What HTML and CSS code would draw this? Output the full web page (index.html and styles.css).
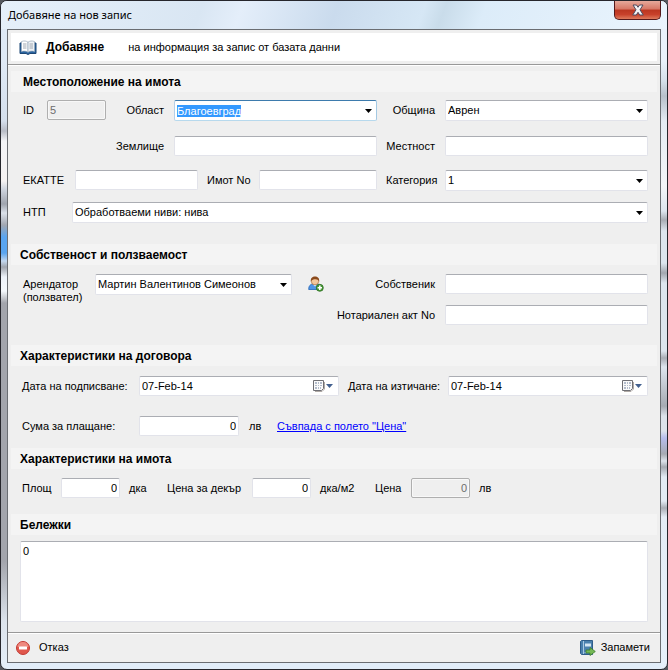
FILE: index.html
```
<!DOCTYPE html>
<html lang="bg">
<head>
<meta charset="utf-8">
<title>Добавяне на нов запис</title>
<link rel="stylesheet" href="styles.css">
</head>
<body>
<div class="window">
  <header class="titlebar">
    <h1>Добавяне на нов запис</h1>
    <button class="close" type="button" aria-label="Затвори">
      <svg width="14" height="12" viewBox="0 0 14 12"><path d="M2 1h3.500l1.500 2.300L8.500 1H12L9 5.800 12.300 11H8.700L7 8.300 5.300 11H1.700L5 5.800z" fill="#f4f4f6" stroke="#4c4a5e" stroke-width="1"/></svg>
    </button>
  </header>

  <form class="client">
    <div class="banner">
      <div class="banner-inner">
        <svg class="book" width="18" height="15" viewBox="0 0 18 15"><path d="M1 3h16v10.500h-6L9 14.500l-2-1H1z" fill="#2a64a0" stroke="#1d4674"/><path d="M2.500 1.500C5 .5 7.500 1 9 2.200v10C7.500 11 5 10.800 2.500 11.500z" fill="#fff" stroke="#9aa9ba" stroke-width=".7"/><path d="M15.500 1.500C13 .5 10.500 1 9 2.200v10c1.500-1.200 4-1.400 6.500-.700z" fill="#edf1f5" stroke="#9aa9ba" stroke-width=".7"/><path d="M4 4h3.500M4 6h3.500M4 8h3.500M10.500 4H14M10.500 6H14M10.500 8H14" stroke="#a0a8b2"/></svg>
        <strong>Добавяне</strong>
        <span>на информация за запис от базата данни</span>
      </div>
    </div>

    <section>
      <h2 class="wide">Местоположение на имота</h2>
      <div class="fields location">
        <label for="id">ID</label>
        <input id="id" class="box" type="text" value="5" disabled>
        <label class="end" for="region">Област</label>
        <div class="combo active"><input id="region" class="box" type="text" role="combobox" aria-expanded="false" value="Благоевград" autofocus onfocus="this.select()"></div>
        <label class="end" for="municipality">Община</label>
        <div class="combo"><select id="municipality" class="box"><option>Аврен</option></select></div>

        <label class="end from-left" for="land">Землище</label>
        <input id="land" class="box" type="text">
        <label class="end" for="area">Местност</label>
        <input id="area" class="box" type="text">

        <div class="left-half codes">
          <label for="ekatte">ЕКАТТЕ</label>
          <input id="ekatte" class="box" type="text">
          <label for="plot">Имот No</label>
          <input id="plot" class="box" type="text">
        </div>
        <label class="indent" for="category">Категория</label>
        <div class="combo"><select id="category" class="box"><option>1</option></select></div>

        <div class="full usage">
          <label for="ntp">НТП</label>
          <div class="combo"><select id="ntp" class="box"><option>Обработваеми ниви: нива</option></select></div>
        </div>
      </div>
    </section>

    <section>
      <h2>Собственост и ползваемост</h2>
      <div class="fields ownership">
        <div class="left-half tenant">
          <label class="two-line" for="tenant">Арендатор<br>(ползвател)</label>
          <div class="combo"><select id="tenant" class="box"><option>Мартин Валентинов Симеонов</option></select></div>
          <button class="icon-button" type="button" aria-label="Нов арендатор">
            <svg width="16" height="16" viewBox="0 0 16 16"><path d="M.700 13.500C.700 9.500 2.500 8.500 4.500 8h5c2 .5 3.500 1.500 3.500 5.500z" fill="#4f95e6" stroke="#2465b5" stroke-width=".8"/><path d="M5 8.500l2 2 2-2z" fill="#e9f3ff"/><circle cx="7" cy="5.200" r="3.700" fill="#f4c79c" stroke="#a0602e" stroke-width=".6"/><path d="M2.800 5.500C2.500 2 4.500.600 7 .600s4.600 1.400 4.200 4.900C10.500 4 9.500 3.300 7.500 3.300S4 3.600 2.800 5.500z" fill="#8a4a1c"/><circle cx="11.800" cy="11.800" r="3.500" fill="#4a9a38" stroke="#2c6e22" stroke-width=".8"/><path d="M11.800 9.600V14M9.600 11.800H14" stroke="#fff" stroke-width="1.600"/></svg>
          </button>
        </div>
        <label class="end" for="owner">Собственик</label>
        <input id="owner" class="box" type="text">
        <label class="end" for="deed">Нотариален акт No</label>
        <input id="deed" class="box" type="text">
      </div>
    </section>

    <section>
      <h2>Характеристики на договора</h2>
      <div class="dates">
        <label for="signed">Дата на подписване:</label>
        <div class="box date">
          <input id="signed" type="text" value="07-Feb-14">
          <button type="button" aria-label="Избор на дата">
            <svg width="22" height="14" viewBox="0 0 22 14"><path d="M1.500 1.500h10v8l-2 2h-8z" fill="#fafafa" stroke="#6f6f74"/><path d="M12.500 3v7l-2.500 2.500H3" fill="none" stroke="#b0aaa6"/><path d="M3 3h2v2H3zM6 3h1v2H6zM8 3h2v2H8zM3 6h2v1H3zM6 6h1v1H6zM8 6h2v1H8zM3 8h2v2H3zM6 8h1v2H6zM8 8h1v2H8z" fill="#b3bccb"/><path d="M14 5h7l-3.500 4z" fill="#43608f"/></svg>
          </button>
        </div>
        <label class="second" for="expires">Дата на изтичане:</label>
        <div class="box date">
          <input id="expires" type="text" value="07-Feb-14">
          <button type="button" aria-label="Избор на дата">
            <svg width="22" height="14" viewBox="0 0 22 14"><path d="M1.500 1.500h10v8l-2 2h-8z" fill="#fafafa" stroke="#6f6f74"/><path d="M12.500 3v7l-2.500 2.500H3" fill="none" stroke="#b0aaa6"/><path d="M3 3h2v2H3zM6 3h1v2H6zM8 3h2v2H8zM3 6h2v1H3zM6 6h1v1H6zM8 6h2v1H8zM3 8h2v2H3zM6 8h1v2H6zM8 8h1v2H8z" fill="#b3bccb"/><path d="M14 5h7l-3.500 4z" fill="#43608f"/></svg>
          </button>
        </div>
      </div>
      <div class="payment">
        <label for="sum">Сума за плащане:</label>
        <input id="sum" class="box number" type="text" value="0">
        <span>лв</span>
        <a href="#price">Съвпада с полето "Цена"</a>
      </div>
    </section>

    <section>
      <h2>Характеристики на имота</h2>
      <div class="pricing">
        <label for="size">Площ</label>
        <input id="size" class="box number" type="text" value="0">
        <span>дка</span>
        <label for="unit">Цена за декър</label>
        <input id="unit" class="box number" type="text" value="0">
        <span>дка/м2</span>
        <label for="price">Цена</label>
        <input id="price" class="box number" type="text" value="0" disabled>
        <span>лв</span>
      </div>
    </section>

    <section class="notes">
      <h2><label for="notes">Бележки</label></h2>
      <textarea id="notes" class="box">0</textarea>
    </section>

    <footer>
      <button type="button">
        <svg width="16" height="16" viewBox="0 0 16 16"><circle cx="8" cy="8" r="6.500" fill="#e0574c" stroke="#c23a34"/><path d="M2.500 7a5.500 5 0 0 1 11 0z" fill="#ee8a80"/><rect x="4" y="6.500" width="8" height="3" rx=".5" fill="#fff"/></svg>
        Отказ
      </button>
      <button type="submit">
        <svg width="16" height="16" viewBox="0 0 16 16"><path d="M1.500.500h11v14h-11l-1-1v-12z" fill="#4b80ae" stroke="#2f5d8a"/><path d="M3.500 1v13" stroke="#a9c8e2"/><path d="M5 3.500h6v3H5z" fill="#d5e5f2"/><path d="M4.500 12.500H12" stroke="#9fc0dc"/><path d="M6 10h4V7.500l5.300 4-5.300 4V13H6z" fill="#76b956" stroke="#3b7d2b" stroke-width=".8"/></svg>
        Запамети
      </button>
    </footer>
  </form>
</div>
</body>
</html>
```

FILE: styles.css
```
* {
  box-sizing: border-box;
}

body {
  margin: 0;
  background: #55585e;
  color: #000;
  font: 11px/13px "Liberation Sans", Arial, sans-serif;
}

input, select, textarea, button {
  margin: 0;
  color: inherit;
  font: inherit;
}

button {
  padding: 0;
  border: 0;
  background: none;
}

label, span, a {
  white-space: nowrap;
}

.window {
  display: flex;
  flex-direction: column;
  min-height: 100vh;
  padding: 0 6px 6px;
  border: 1px solid #26262c;
  border-radius: 7px;
  background:
    linear-gradient(#dfe9f5 60px, #d5dfec 120px, #b8bcc6 130px, #f3f4f7 140px, #f5f2f2 180px, #cfd5df 188px, #9fa4ae 203px, #dbe1ea 212px, #a2a7b1 224px, #5aa5f0 236px, #5aa5f0 252px, #c3d7ee 260px, #a0a5ae 266px, #eef3fa 276px, #f4f8fc 290px, #a3a5ac 302px, #a3a5ac 560px, #dce3ec 620px, #e4eef8) left / 6px 100% no-repeat,
    linear-gradient(#e9f1fa 60px, #d5e0ea 80px, #b8c0ca 95px, #e4ebf3 120px, #f3f5f8 185px, #dde5ee 210px, #a8acb4 219px, #dde5ee 230px, #dde5ee 262px, #a3a7af 272px, #dde5ee 282px, #dde5ee 350px, #a9adb5 357px, #dde5ee 366px, #a6aab2 405px, #dce2ea 415px, #dce2ea 430px, #b7bdeb 437px, #a6aab2 453px, #dce2ea 460px, #a6aab2 466px, #e2eaf3 476px, #e2eaf3 500px, #a9adb5 507px, #e4ecf5 516px, #e6f0fa) right / 6px 100% no-repeat,
    #e2edf9;
}

.titlebar {
  display: flex;
  justify-content: space-between;
  height: 28px;
  margin: 0 -6px;
  padding: 0 6px 0 7px;
  border-radius: 6px 6px 0 0;
  background: linear-gradient(110deg, #e6f0fa 0%, #d9e6f3 30%, #e4eefa 36%, #cadbed 50%, #d6e7f5 63%, #c9dcea 66%, #dcecf9 72%, #eaf4fd 100%);
}

.titlebar h1 {
  margin: 0;
  font: 11px/28px "Noto Sans", "Open Sans", sans-serif;
}

.close {
  display: grid;
  place-items: center;
  width: 47px;
  height: 19px;
  border: 1px solid #54191b;
  border-top: 0;
  border-radius: 0 0 5px 5px;
  background: linear-gradient(#e6a99b, #d67765 45%, #bb3621 50%, #c8412b 75%, #de7a5c);
}

.client {
  display: flex;
  flex: 1;
  flex-direction: column;
  border: 1px solid #6a6d72;
  background: #efefef;
}

.banner {
  padding: 3px;
  margin-bottom: 6px;
  border-bottom: 1px solid #999;
  box-shadow: 0 1px #fff;
}

.banner-inner {
  display: flex;
  align-items: center;
  height: 28px;
  padding-left: 8px;
  background: #fff;
}

.banner strong {
  margin: 0 24px 0 9px;
  font-size: 12px;
}

h2 {
  margin: 0 3px;
  padding: 1px 0 0 9px;
  background: #f4f4f4;
  font: bold 12px/20px "Liberation Sans", Arial, sans-serif;
}

h2.wide {
  padding-left: 12px;
}

.box {
  width: 100%;
  min-width: 0;
  height: 20px;
  padding: 0 2px;
  border: 1px solid #e2e3ea;
  border-top-color: #abadb3;
  border-radius: 2px;
  outline: 0;
  background: #fff;
}

.box:disabled {
  border-color: #afafaf;
  background: #efefef;
  color: #6d6d6d;
  box-shadow: inset 0 0 0 1px #f8f8f8;
}

.number {
  width: 59px;
  text-align: right;
}

.combo {
  position: relative;
  min-width: 0;
}

.combo .box {
  display: block;
  height: 21px;
  appearance: none;
}

.combo::after {
  content: "";
  position: absolute;
  top: 9px;
  right: 5px;
  width: 7px;
  height: 4px;
  background: #000;
  clip-path: polygon(0 0, 100% 0, 50% 100%);
  pointer-events: none;
}

.active .box {
  border-color: #3d7bad #a4c9e3 #b7d9ed #b5cfe7;
}

::selection {
  background: #39f;
  color: #fff;
}

.fields {
  display: grid;
  grid-template-columns: 24px 59px 68px 1fr 68px 1fr;
  padding: 8px 12px 0 15px;
}

.fields label {
  line-height: 20px;
}

.location {
  grid-template-rows: 36px 34px 32px 42px;
}

.ownership {
  grid-template-rows: 31px 40px;
  padding-top: 9px;
}

.fields .end {
  justify-self: end;
  padding-right: 10px;
}

.fields .from-left {
  grid-column: 1 / 4;
}

.fields .indent {
  padding-left: 9px;
}

.left-half {
  grid-column: 1 / 5;
}

.full {
  grid-column: 1 / 7;
}

.codes {
  display: grid;
  grid-template-columns: 52px 1fr 61px 118px;
}

.codes label + input + label {
  padding-left: 9px;
}

.usage {
  display: grid;
  grid-template-columns: 49px 1fr;
}

.tenant {
  display: grid;
  grid-row: 1 / 3;
  grid-template-columns: 72px 1fr 16px;
  align-items: start;
  padding-right: 53px;
}

.tenant .combo {
  margin-right: 16px;
}

.fields .two-line {
  padding-top: 4px;
  line-height: 13px;
}

.icon-button {
  height: 20px;
}

.icon-button svg {
  display: block;
  margin: auto;
}

.dates {
  display: grid;
  grid-template-columns: 117px 1fr 109px 1fr;
  align-items: center;
  padding: 10px 12px 0 14px;
}

.dates .second {
  padding-left: 9px;
}

.date {
  display: flex;
  align-items: center;
  padding-right: 4px;
}

.date input {
  flex: 1;
  min-width: 0;
  padding: 0;
  border: 0;
  outline: 0;
  background: none;
}

.date svg {
  display: block;
}

.payment {
  display: flex;
  align-items: center;
  padding: 20px 12px 12px 14px;
}

.payment label {
  width: 117px;
}

.payment .number {
  width: 100px;
}

.payment span {
  width: 38px;
  padding-left: 10px;
}

a {
  color: #00f;
}

.pricing {
  display: flex;
  align-items: center;
  padding: 9px 12px 16px 14px;
}

.pricing label {
  width: 39px;
}

.pricing label:nth-of-type(2) {
  width: 85px;
}

.pricing label:nth-of-type(3) {
  width: 36px;
}

.pricing span {
  width: 47px;
  padding-left: 9px;
}

.pricing span:nth-of-type(2) {
  width: 64px;
}

.notes {
  display: flex;
  flex: 1;
  flex-direction: column;
}

.notes textarea {
  flex: 1;
  width: auto;
  min-height: 60px;
  margin: 6px 12px 10px;
  padding: 3px 2px;
  resize: none;
}

footer {
  display: flex;
  align-items: center;
  justify-content: space-between;
  height: 30px;
  padding: 0 10px 0 7px;
  border-top: 1px solid #999;
  box-shadow: inset 0 1px #fff;
}

footer button {
  display: flex;
  gap: 8px;
  align-items: center;
}

footer button[type="submit"] {
  gap: 5px;
}
```
